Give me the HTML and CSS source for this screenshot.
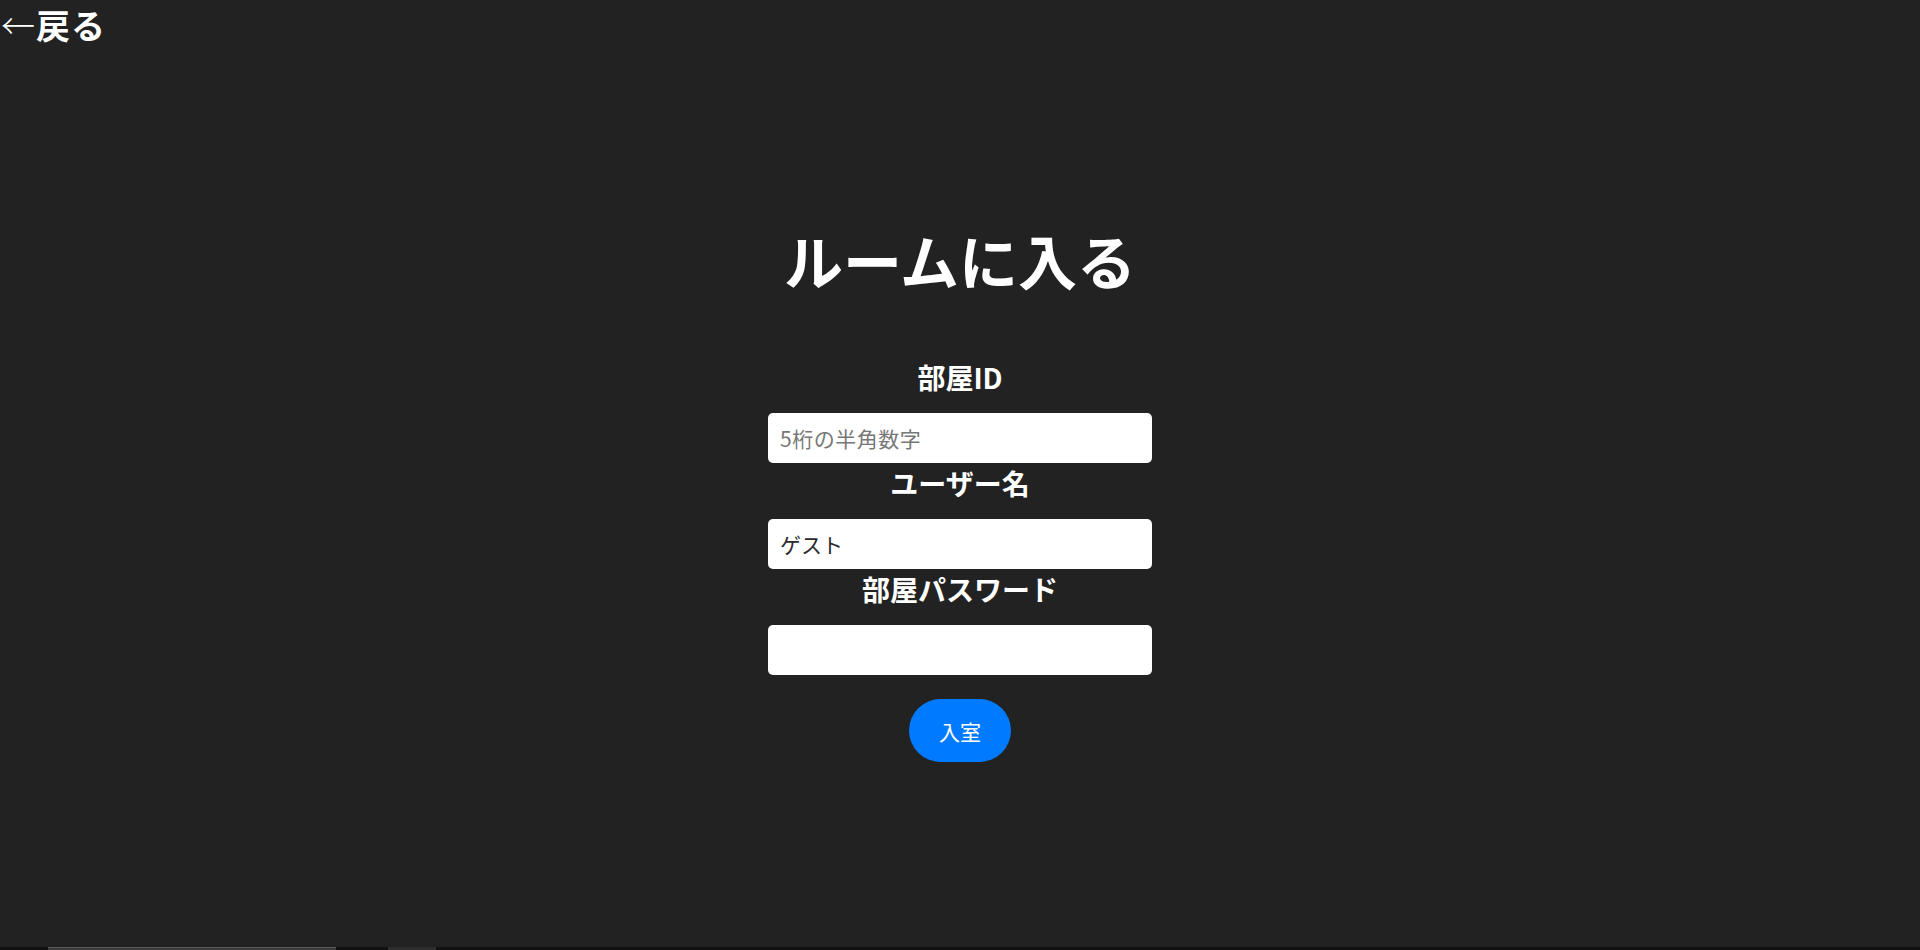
FILE: index.html
```html
<!DOCTYPE html>
<html lang="ja">
<head>
<meta charset="utf-8">
<title>ルームに入る</title>
<link rel="stylesheet" href="styles.css">
</head>
<body>
<div class="page">
  <a class="back" href="#"><span class="arrow">←</span>戻る</a>
  <main class="main">
    <h1 class="title">ルームに入る</h1>
    <form class="form">
      <label class="label" for="room">部屋ID</label>
      <input class="field" id="room" type="text" placeholder="5桁の半角数字">
      <label class="label" for="user">ユーザー名</label>
      <input class="field" id="user" type="text" value="ゲスト">
      <label class="label" for="pass">部屋パスワード</label>
      <input class="field" id="pass" type="password">
      <button class="enter" type="button">入室</button>
    </form>
  </main>
  <div class="strip">
    <span class="strip-gap s1"></span>
    <span class="strip-bar"></span>
    <span class="strip-gap s2"></span>
    <span class="strip-tab"></span>
  </div>
</div>
</body>
</html>
```

FILE: styles.css
```css
html, body {
  margin: 0;
  padding: 0;
}

body {
  background: #222222;
  color: #ffffff;
  font-family: "Noto Sans CJK JP", "Noto Sans", sans-serif;
}

.page {
  height: 950px;
  display: flex;
  flex-direction: column;
  overflow: hidden;
}

.back {
  display: block;
  align-self: flex-start;
  color: #ffffff;
  text-decoration: none;
  font-size: 34px;
  font-weight: 700;
  line-height: normal;
  padding-left: 1px;
  letter-spacing: 1px;
}

.arrow {
  font-weight: 300;
}

.main {
  flex: 1;
  display: flex;
  flex-direction: column;
  align-items: center;
  padding-top: 177px;
}

.title {
  margin: 0;
  font-size: 59px;
  font-weight: 700;
  line-height: 67px;
  letter-spacing: 0;
}

.form {
  width: 384px;
  margin-top: 67px;
  display: flex;
  flex-direction: column;
  align-items: center;
}

.label {
  display: block;
  font-size: 28px;
  font-weight: 700;
  line-height: 34px;
  margin-top: 3px;
  margin-bottom: 19px;
}

.label:first-child {
  margin-top: 0;
}

.field {
  box-sizing: border-box;
  width: 384px;
  height: 50px;
  border: none;
  border-radius: 5px;
  background: #ffffff;
  padding: 0 12px;
  font-family: "Noto Sans CJK JP", "Noto Sans", sans-serif;
  font-size: 21px;
  color: #2a2a2a;
  outline: none;
}

.field::placeholder {
  color: #777777;
  letter-spacing: 0.5px;
}

.enter {
  margin-top: 24px;
  height: 63px;
  padding: 0 30px;
  border: none;
  border-radius: 32px;
  background: #007bff;
  color: #ffffff;
  font-family: "Noto Sans CJK JP", "Noto Sans", sans-serif;
  font-size: 21px;
  font-weight: 400;
  cursor: pointer;
}

.strip {
  height: 3px;
  background: #111111;
  display: flex;
}

.strip-gap.s1 {
  width: 48px;
}

.strip-bar {
  width: 288px;
  background: #3b3b3b;
  border-top: 1px solid #5a5a5a;
  box-sizing: border-box;
}

.strip-gap.s2 {
  width: 52px;
}

.strip-tab {
  width: 48px;
  background: #2e2e2e;
}
```
